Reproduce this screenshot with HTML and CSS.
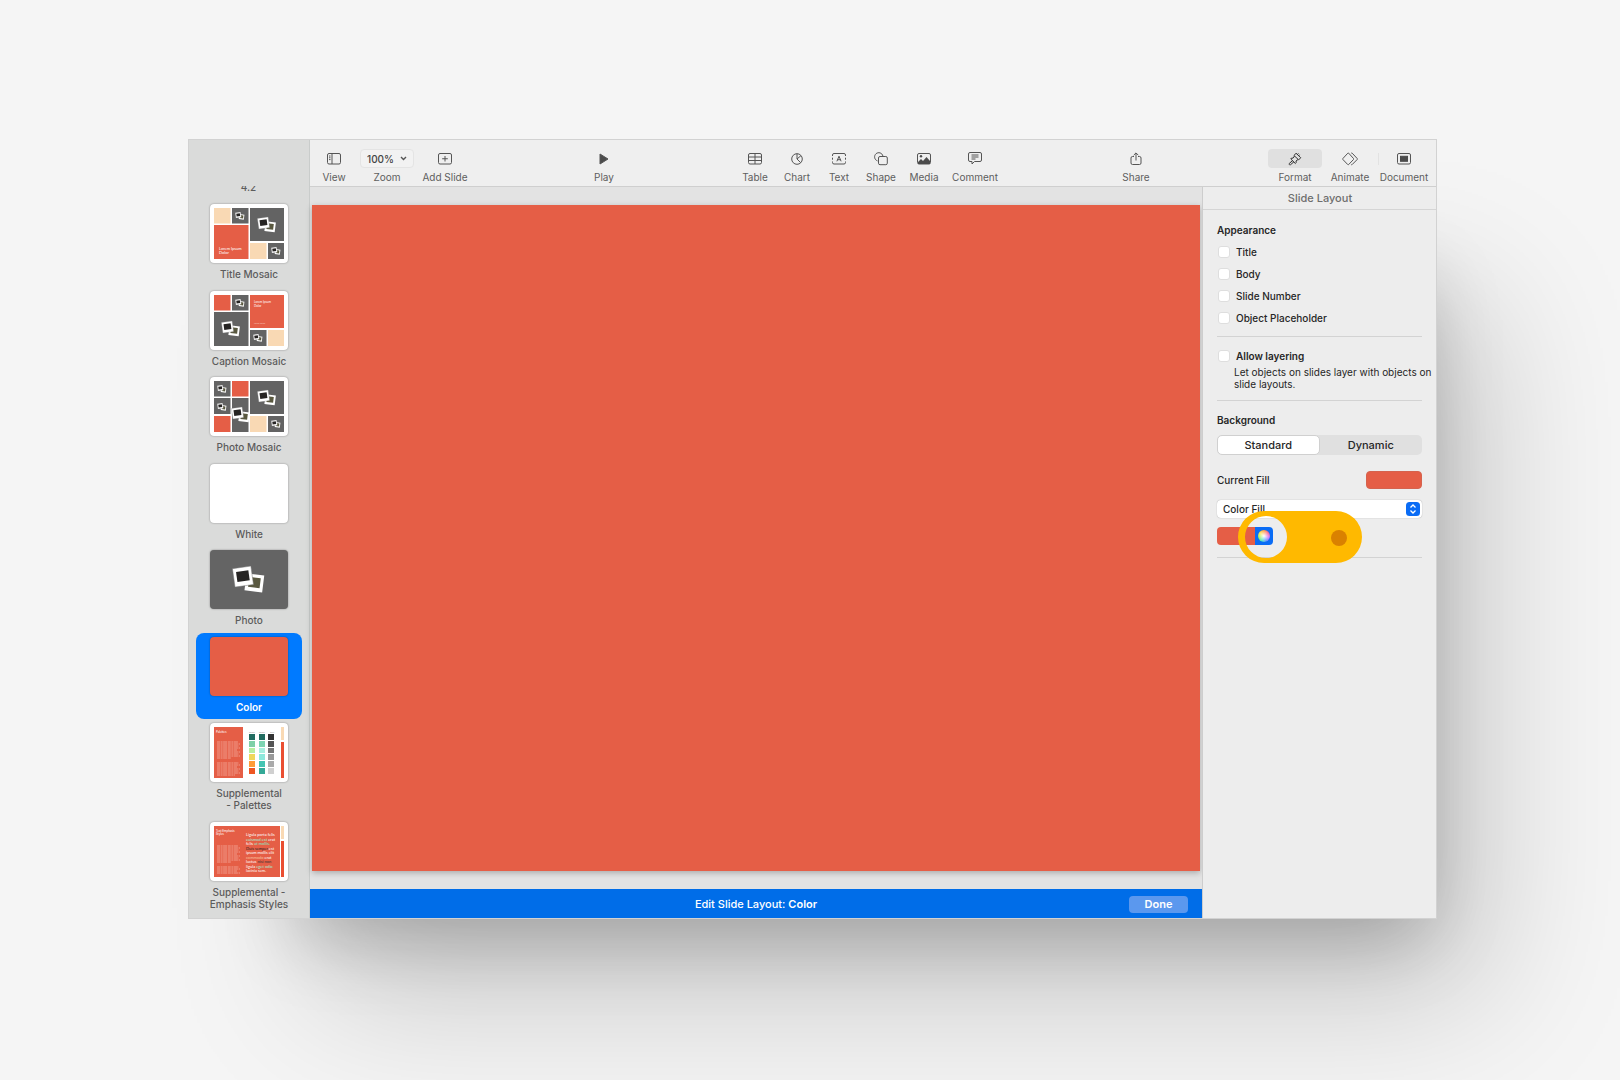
FILE: index.html
```html
<!DOCTYPE html>
<html lang="en">
<head>
<meta charset="utf-8">
<title>Edit Slide Layout</title>
<link rel="stylesheet" href="styles.css">
</head>
<body>
<svg class="defs" aria-hidden="true">
  <defs>
    <g id="photos">
      <g transform="rotate(7 3.400 1.900)"><rect x="-2.300" y="-3.600" width="11.500" height="11" fill="#fff"/><rect x="-.3" y="-1.600" width="7.500" height="6.500" fill="#59583f"/></g>
      <g transform="rotate(-8 -3.900 -2.200)"><rect x="-9.900" y="-8.200" width="12" height="12" fill="#fff" stroke="#777" stroke-width=".3"/><rect x="-7.900" y="-5.800" width="8" height="6.500" fill="#262423"/></g>
    </g>
  </defs>
</svg>
<main class="window">
  <aside class="sidebar">
    <div class="clipped-label">4.2</div>
    <ul class="layouts">
      <li class="layout">
        <svg class="thumb" viewBox="0 0 78 59">
          <rect x="4" y="4" width="16.500" height="15.500" fill="#f9d9b4"/><rect x="22" y="4" width="16.500" height="15.500" fill="#636363"/>
          <rect x="40" y="4" width="34" height="33" fill="#636363"/><rect x="4" y="21" width="34.500" height="34" fill="#e55e46"/>
          <rect x="40" y="39" width="16.500" height="16" fill="#f9d9b4"/><rect x="58" y="39" width="16" height="16" fill="#636363"/>
          <use href="#photos" transform="translate(30 12) scale(.45)"/><use href="#photos" transform="translate(57 21) scale(.9)"/><use href="#photos" transform="translate(66 47) scale(.45)"/>
          <text x="9" y="46" font-size="4" fill="#fff">Lorem Ipsum</text><text x="9" y="50" font-size="4" fill="#fff">Dolor</text>
        </svg>
        <span>Title Mosaic</span>
      </li>
      <li class="layout">
        <svg class="thumb" viewBox="0 0 78 59">
          <rect x="4" y="4" width="16.500" height="15.500" fill="#e55e46"/><rect x="22" y="4" width="16.500" height="15.500" fill="#636363"/>
          <rect x="40" y="4" width="34" height="33" fill="#e55e46"/><rect x="4" y="21" width="34.500" height="34" fill="#636363"/>
          <rect x="40" y="39" width="16.500" height="16" fill="#636363"/><rect x="58" y="39" width="16" height="16" fill="#f9d9b4"/>
          <use href="#photos" transform="translate(30 12) scale(.45)"/><use href="#photos" transform="translate(21 38) scale(.9)"/><use href="#photos" transform="translate(48 47) scale(.45)"/>
          <text x="44" y="12" font-size="3" fill="#fff">Lorem Ipsum</text><text x="44" y="15.500" font-size="3" fill="#fff">Dolor</text><text x="44" y="33" font-size="2" fill="#f7c5bb">Lorem ipsum</text>
        </svg>
        <span>Caption Mosaic</span>
      </li>
      <li class="layout">
        <svg class="thumb" viewBox="0 0 78 59">
          <rect x="4" y="4" width="16.500" height="15.500" fill="#636363"/><rect x="22" y="4" width="16.500" height="15.500" fill="#e55e46"/>
          <rect x="40" y="4" width="34" height="33" fill="#636363"/><rect x="4" y="21" width="16.500" height="16" fill="#636363"/>
          <rect x="22" y="21" width="16.500" height="34" fill="#636363"/><rect x="4" y="39" width="16.500" height="16" fill="#e55e46"/>
          <rect x="40" y="39" width="16.500" height="16" fill="#f9d9b4"/><rect x="58" y="39" width="16" height="16" fill="#636363"/>
          <use href="#photos" transform="translate(12 12) scale(.45)"/><use href="#photos" transform="translate(12 30) scale(.45)"/><use href="#photos" transform="translate(57 21) scale(.9)"/><use href="#photos" transform="translate(31 38) scale(.9)"/><use href="#photos" transform="translate(66 47) scale(.45)"/>
        </svg>
        <span>Photo Mosaic</span>
      </li>
      <li class="layout">
        <svg class="thumb" viewBox="0 0 78 59"></svg>
        <span>White</span>
      </li>
      <li class="layout">
        <svg class="thumb thumb-gray" viewBox="0 0 78 59"><use href="#photos" transform="translate(39 30) scale(1.550)"/></svg>
        <span>Photo</span>
      </li>
      <li class="layout selected">
        <svg class="thumb thumb-color" viewBox="0 0 78 59"></svg>
        <span>Color</span>
      </li>
      <li class="layout">
        <svg class="thumb" viewBox="0 0 78 59">
          <rect x="4" y="4" width="29" height="51" fill="#e55e46"/>
          <text x="6" y="9.500" font-size="3" fill="#fff">Palettes</text>
          <path d="M7 19h21M7 21h23M7 23h22M7 25h23M7 27h20M7 29h23M7 31h22M7 33h23M7 35h14M7 40h22M7 42h23M7 44h20M7 46h23M7 48h22M7 50h23M7 52h18" stroke="#f2a394" stroke-width=".9" stroke-dasharray="3 .6 2 .5 4 .7"/>
          <g font-size="2" fill="#888"><text x="39" y="9.500">Colors</text><text x="49" y="9.500">Colors</text><text x="60" y="9.500">Gray</text></g>
          <path d="M39 11h6v6h-6z" fill="#216c60"/><path d="M39 18h6v6h-6z" fill="#7fd0a7"/><path d="M39 25h6v5h-6z" fill="#b7eea0"/><path d="M39 31h6v6h-6z" fill="#efd75a"/><path d="M39 38h6v6h-6z" fill="#ff9c38"/><path d="M39 45h6v6h-6z" fill="#ee5723"/>
          <path d="M49 11h6v6h-6z" fill="#216c60"/><path d="M49 18h6v6h-6z" fill="#7dd4b2"/><path d="M49 25h6v5h-6z" fill="#a7efdf"/><path d="M49 31h6v6h-6z" fill="#8ee9dc"/><path d="M49 38h6v6h-6z" fill="#45c4b2"/><path d="M49 45h6v6h-6z" fill="#34a997"/>
          <path d="M58 11h6v6h-6z" fill="#333"/><path d="M58 18h6v6h-6z" fill="#555"/><path d="M58 25h6v5h-6z" fill="#777"/><path d="M58 31h6v6h-6z" fill="#999"/><path d="M58 38h6v6h-6z" fill="#aaa"/><path d="M58 45h6v6h-6z" fill="#d0d0d0"/>
          <path d="M71 4h3v13h-3z" fill="#f9d9b4"/><path d="M71 19h3v36h-3z" fill="#ea4f32"/>
        </svg>
        <span>Supplemental<br>- Palettes</span>
      </li>
      <li class="layout">
        <svg class="thumb" viewBox="0 0 78 59">
          <rect x="4" y="4" width="66" height="51" fill="#e55e46"/>
          <g font-size="3" fill="#fff"><text x="6" y="9.500">Text Emphasis</text><text x="6" y="13">Styles</text></g>
          <path d="M7 24h21M7 26h23M7 28h22M7 30h23M7 32h20M7 34h23M7 36h22M7 38h23M7 40h14M7 45h22M7 47h23M7 49h20M7 51h23" stroke="#f2a394" stroke-width=".9" stroke-dasharray="3 .6 2 .5 4 .7"/>
          <g font-size="4" fill="#fff">
            <text x="36" y="14">Ligula porta felis</text>
            <text x="36" y="18.500"><tspan fill="#9ff0d5">euismod est</tspan> erat</text>
            <text x="36" y="23">felis <tspan fill="#7deacb">ut mollis.</tspan></text>
            <text x="36" y="27.500"><tspan fill="#222">Duis semper</tspan> est</text>
            <text x="36" y="32">ipsum mollis elit</text>
            <text x="36" y="36.500"><tspan fill="#f7c39e">commodo</tspan> erat</text>
            <text x="36" y="41">luctus <tspan fill="#333">nisi non</tspan></text>
            <text x="36" y="45.500">ligula <tspan fill="#9ff0d5">eget odio</tspan></text>
            <text x="36" y="50">lacinia sem.</text>
          </g>
          <path d="M71 4h3v13h-3z" fill="#f9d9b4"/><path d="M71 19h3v36h-3z" fill="#ea4f32"/>
        </svg>
        <span>Supplemental -<br>Emphasis Styles</span>
      </li>
    </ul>
  </aside>

  <div class="content">
    <header class="toolbar">
      <div class="group">
        <button class="tool w48"><span class="icon"><svg width="14" height="12" viewBox="0 0 14 12"><rect x=".5" y=".5" width="13" height="10.500" rx="1.500"/><path d="M5 .5V11M2 3h1.500M2 4.800h1.500M2 6.600h1.500"/></svg></span>View</button>
        <div class="tool w58">
          <span class="icon zoom-box">
            <select id="zoom" class="zoom"><option>100%</option></select>
            <svg width="7" height="5" viewBox="0 0 7 5"><path d="M1 1l2.500 2.500L6 1" stroke-width="1.400"/></svg>
          </span>
          <label for="zoom">Zoom</label>
        </div>
        <button class="tool w58"><span class="icon"><svg width="14" height="12" viewBox="0 0 14 12"><rect x=".5" y=".5" width="13" height="10.500" rx="1.500"/><path d="M7 3v5.500M4.200 5.750h5.600"/></svg></span>Add Slide</button>
      </div>
      <div class="group">
        <button class="tool w48"><span class="icon"><svg width="10" height="12" viewBox="0 0 10 12"><path d="M1 1l8 5-8 5z" fill="#4c4c4c"/></svg></span>Play</button>
      </div>
      <div class="group">
        <button class="tool w42"><span class="icon"><svg width="14" height="12" viewBox="0 0 14 12"><rect x=".5" y=".5" width="13" height="10.500" rx="1.500"/><path d="M.5 4h13M.5 7.500h13M7 .5V11"/></svg></span>Table</button>
        <button class="tool w42"><span class="icon"><svg width="12" height="12" viewBox="0 0 12 12"><circle cx="6" cy="6" r="5.300"/><path d="M6 .7V6l3.700 3.700M6 6l4-3.400"/></svg></span>Chart</button>
        <button class="tool w42"><span class="icon"><svg width="14" height="12" viewBox="0 0 14 12"><path d="M.5 3V2Q.5.5 2 .5h10q1.500 0 1.500 1.500v1M.5 8.500v1Q.5 11 2 11h10q1.500 0 1.500-1.500v-1M.5 4.700v2M13.500 4.700v2M4.900 8.300L7 3.200l2.100 5.100M5.600 6.700h2.800"/></svg></span>Text</button>
        <button class="tool w42"><span class="icon"><svg width="14" height="14" viewBox="0 0 14 14"><path d="M3.500 8.900A4.200 4.200 0 1 1 8.900 4"/><rect x="4.500" y="4.500" width="8.800" height="8.200" rx="1.500"/></svg></span>Shape</button>
        <button class="tool w44"><span class="icon"><svg width="14" height="12" viewBox="0 0 14 12"><rect x=".5" y=".5" width="13" height="10.500" rx="1.500"/><path d="M1 9l3-3 2 2 3.500-4L13 8v3H1z" fill="#4c4c4c" stroke="none"/><circle cx="4" cy="3.300" r="1.200" fill="#4c4c4c" stroke="none"/></svg></span>Media</button>
        <button class="tool w58"><span class="icon"><svg width="14" height="13" viewBox="0 0 14 13"><path d="M2 .5h10q1.500 0 1.500 1.500v6q0 1.500-1.500 1.500H6.500L4 12V9.500H2Q.5 9.500.5 8V2Q.5.500 2 .5zM3.500 3h7M3.500 5h7M3.500 7h4"/></svg></span>Comment</button>
      </div>
      <div class="group">
        <button class="tool w52"><span class="icon"><svg width="12" height="14" viewBox="0 0 12 14"><path d="M4 4.500H2.500Q1 4.500 1 6v5q0 1.500 1.500 1.500h7Q11 12.500 11 11V6q0-1.500-1.500-1.500H8M6 8.500V1M3.700 3.200L6 .9l2.300 2.300"/></svg></span>Share</button>
      </div>
      <div class="group">
        <button class="tool active w54"><span class="icon"><svg width="14" height="14" viewBox="0 0 14 14"><path d="M8 1.200l4.700 4.500-2 2.200L6 3.500zM6.500 4L5 6.200 3.600 6l-.8 1 4.600 4.500.8-1L8 9l2-1.500M4.500 8.700L1.300 11.400q-.5 1 .3 1.400.8.300 1.300-.4l3-2.600M9 2.800l1.500-1.300M10.500 4l1-1.300" stroke="#333"/></svg></span>Format</button>
        <button class="tool w56"><span class="icon"><svg width="16" height="14" viewBox="0 0 16 14"><path d="M5.800 1.200Q6.200.8 6.700 1.200L11.500 6.500q.4.500 0 1l-4.800 5q-.5.500-1 0L.9 7.500q-.4-.5 0-1zM9.200 1.200q.5-.4 1 0l5 5.300q.4.500 0 1l-5 5q-.5.500-1 0"/></svg></span>Animate</button>
        <button class="tool divided w52"><span class="icon"><svg width="14" height="12" viewBox="0 0 14 12"><rect x=".5" y=".5" width="13" height="10.500" rx="1.500"/><rect x="3.500" y="3.300" width="7" height="5" fill="#4c4c4c" stroke="#4c4c4c"/></svg></span>Document</button>
      </div>
    </header>

    <div class="workspace">
      <section class="editor">
        <div class="canvas"><div class="slide"></div></div>
        <footer class="edit-bar">
          <p>Edit Slide Layout: <strong>Color</strong></p>
          <button class="done">Done</button>
        </footer>
      </section>

      <aside class="inspector">
        <h1>Slide Layout</h1>
        <div class="panel">
          <section class="block">
            <h2>Appearance</h2>
            <label class="check"><input type="checkbox">Title</label>
            <label class="check"><input type="checkbox">Body</label>
            <label class="check"><input type="checkbox">Slide Number</label>
            <label class="check"><input type="checkbox">Object Placeholder</label>
          </section>
          <section class="block">
            <label class="check strong"><input type="checkbox">Allow layering</label>
            <p class="hint">Let objects on slides layer with objects on slide layouts.</p>
          </section>
          <section class="block background">
            <h2>Background</h2>
            <div class="segmented">
              <label><input type="radio" name="mode" checked>Standard</label>
              <label><input type="radio" name="mode">Dynamic</label>
            </div>
            <div class="fill-row"><span>Current Fill</span><button class="well" aria-label="Current fill color"></button></div>
            <div class="menu">
              <select class="fill-select" aria-label="Fill type"><option>Color Fill</option></select>
              <svg width="14" height="14" viewBox="0 0 14 14"><rect width="14" height="14" rx="3.500" fill="#0a6cf5"/><path d="M4.500 5.500L7 3l2.500 2.500M4.500 8.500L7 11l2.500-2.500" fill="none" stroke="#fff" stroke-width="1.300"/></svg>
            </div>
            <div class="picker">
              <button class="swatch" aria-label="Color"></button><button class="wheel" aria-label="Color wheel"><i></i></button>
              <svg class="callout" width="124" height="52" viewBox="0 0 124 52"><path fill-rule="evenodd" fill="#ffb900" d="M26 0h72a26 26 0 0 1 0 52H26A26 26 0 0 1 26 0zM28 5a21 21 0 1 0 0 42 21 21 0 0 0 0-42z"/><circle cx="101" cy="27" r="8" fill="#da8100"/></svg>
            </div>
          </section>
        </div>
      </aside>
    </div>
  </div>
</main>
</body>
</html>
```
FILE: styles.css
```css
* { box-sizing: border-box; }

body {
  margin: 0;
  min-height: 100vh;
  padding: 139px 183px 0 188px;
  background: #f5f5f5;
  color: #262626;
  font-family: Inter, "Liberation Sans", sans-serif;
  font-size: 11px;
  overflow-x: hidden;
}

button, select, input { margin: 0; font: inherit; color: inherit; }
button { padding: 0; border: 0; background: none; }
h1, h2, p, ul { margin: 0; padding: 0; }
.defs { position: absolute; width: 0; height: 0; }

.window {
  display: grid;
  grid-template-columns: 122px minmax(0, 1fr);
  outline: 1px solid #d2d2d2;
  outline-offset: -1px;
  background: #ededed;
  box-shadow:
    90px 120px 140px -40px rgba(0, 0, 0, .18),
    50px 80px 70px -60px rgba(0, 0, 0, .22);
}

/* Layout navigator */
.sidebar {
  display: flex;
  flex-direction: column;
  padding: 47px 0 3px;
  border-right: 1px solid #c9cccb;
  background: #dadbda;
  color: #5c5c5c;
  font-size: 10px;
  font-weight: 500;
  line-height: 12px;
  text-align: center;
}
.clipped-label {
  display: flex;
  justify-content: center;
  align-items: flex-end;
  height: 7px;
  margin-bottom: 7px;
  overflow: hidden;
}
.layouts {
  display: flex;
  flex: 1;
  flex-direction: column;
  justify-content: space-between;
  padding: 0 7px 0 8px;
  list-style: none;
}
.layout {
  display: flex;
  flex-direction: column;
  align-items: center;
  gap: 5px;
  padding: 4px 0 6px;
  border-radius: 8px;
}
.layout.selected { background: #007aff; color: #fff; font-weight: 600; }
.thumb {
  width: 78px;
  height: 59px;
  border-radius: 4px;
  background: #fff;
  box-shadow: 0 0 2px rgba(0, 0, 0, .4);
}
.thumb text { font-family: Lato, sans-serif; font-weight: 400; }
.thumb-gray { background: #646464; }
.thumb-color { background: #e55e46; }

/* Toolbar */
.toolbar {
  display: flex;
  justify-content: space-between;
  height: 48px;
  padding: 10px 7px 0 0;
  border-bottom: 1px solid #cfcfcf;
  background: #efefef;
  color: #5e5e5e;
  font-size: 10px;
  line-height: 12px;
}
.group { display: flex; }
.tool { display: flex; flex-direction: column; align-items: center; gap: 3px; }
.icon { display: flex; align-items: center; justify-content: center; height: 19px; }
.icon svg { fill: none; stroke: #555; stroke-width: 1; }
.w42 { width: 42px; }
.w44 { width: 44px; }
.w48 { width: 48px; }
.w52 { width: 52px; }
.w54 { width: 54px; }
.w56 { width: 56px; }
.w58 { width: 58px; }
.zoom-box {
  gap: 6px;
  width: 54px;
  border: 1px solid #e4e4e4;
  border-radius: 4px;
  background: #f2f2f2;
}
.zoom {
  appearance: none;
  padding: 0;
  border: 0;
  background: none;
  color: #444;
  font-size: 10px;
  font-weight: 500;
}
.active .icon { align-self: stretch; border-radius: 4px; background: #e0e0e0; }
.divided .icon { align-self: stretch; background: linear-gradient(#e2e2e2, #e2e2e2) left center / 1px 12px no-repeat; }

/* Editor */
.workspace { display: grid; grid-template-columns: minmax(0, 1fr) 235px; }
.editor { display: flex; flex-direction: column; }
.canvas { padding: 18px 2px; background: #e3e3e3; }
.slide { aspect-ratio: 4 / 3; background: #e55e46; box-shadow: 0 2px 6px rgba(0, 0, 0, .25); }
.edit-bar {
  display: grid;
  grid-template-columns: 1fr auto 1fr;
  align-items: center;
  height: 30px;
  padding: 0 14px;
  background: #006de8;
  color: #fff;
}
.edit-bar p { grid-column: 2; font-weight: 500; }
.edit-bar strong { font-weight: 600; }
.done {
  justify-self: end;
  width: 59px;
  height: 17px;
  border-radius: 4px;
  background: #5b98ee;
  font-weight: 600;
}

/* Inspector */
.inspector { border-left: 1px solid #cdcdcd; background: #ededed; }
.inspector h1 {
  height: 23px;
  border-bottom: 1px solid #d5d5d5;
  color: #6e6e6e;
  font-size: 11px;
  font-weight: 500;
  line-height: 22px;
  text-align: center;
}
.panel { padding: 11px 15px 11px 14px; }
.block { padding-bottom: 7px; border-bottom: 1px solid #d3d3d3; }
.block + .block { padding-top: 8px; }
.block h2 { margin-bottom: 2px; font-size: 10px; font-weight: 600; line-height: 18px; }
.check {
  display: flex;
  align-items: center;
  gap: 6px;
  height: 22px;
  padding-left: 1px;
  font-size: 10px;
  font-weight: 500;
}
.check.strong { font-weight: 600; }
.check input {
  appearance: none;
  width: 12px;
  height: 12px;
  border: 1px solid #dedede;
  border-radius: 3px;
  background: #fff;
}
.hint { margin: -1px -14px 3px 17px; font-size: 10px; line-height: 12px; }
.block.background { padding-top: 10px; padding-bottom: 12px; }
.segmented {
  display: grid;
  grid-template-columns: 1fr 1fr;
  height: 20px;
  margin-top: 6px;
  border-radius: 5px;
  background: #e0e0e0;
  font-weight: 500;
  line-height: 18px;
  text-align: center;
}
.segmented label { border: 1px solid transparent; border-radius: 5px; }
.segmented label:has(:checked) { border-color: #d0d0d0; background: #fff; }
.segmented input { position: absolute; opacity: 0; }
.fill-row {
  display: flex;
  justify-content: space-between;
  align-items: center;
  margin-top: 16px;
  font-size: 10px;
  font-weight: 500;
}
.well { width: 56px; height: 18px; border: 1px solid #d5634e; border-radius: 4px; background: #e55e46; }
.menu {
  display: flex;
  align-items: center;
  height: 18px;
  margin-top: 11px;
  padding: 0 2px 0 6px;
  border-radius: 4px;
  background: #fff;
  box-shadow: 0 0 1px rgba(0, 0, 0, .4);
}
.fill-select {
  appearance: none;
  flex: 1;
  padding: 0;
  border: 0;
  background: none;
  font-size: 10px;
  font-weight: 500;
}
.picker { position: relative; display: flex; height: 18px; margin-top: 9px; }
.swatch { width: 38px; border-radius: 4px 0 0 4px; background: #e55e46; }
.wheel { display: grid; place-items: center; width: 18px; border-radius: 0 4px 4px 0; background: #0a6cf5; }
.wheel i {
  width: 12px;
  height: 12px;
  border-radius: 50%;
  background:
    radial-gradient(#fff, rgba(255, 255, 255, 0) 70%),
    conic-gradient(#ff9a3c, #ff5a8a, #c86bff, #5a8dff, #45e0c0, #9ef05a, #ffe04a, #ff9a3c);
}
.callout { position: absolute; left: 21px; top: -16px; }
```
